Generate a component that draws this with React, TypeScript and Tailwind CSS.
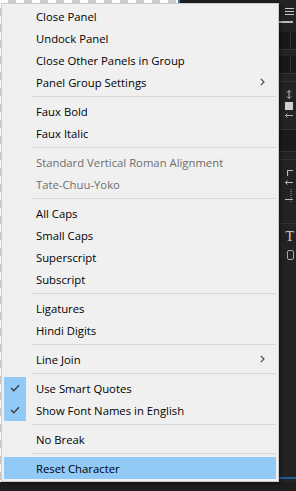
import React from "react";

type Item =
  | { type: "sep" }
  | { type: "item"; label: string; disabled?: boolean; checked?: boolean; sub?: boolean; active?: boolean };

const items: Item[] = [
  { type: "item", label: "Close Panel" },
  { type: "item", label: "Undock Panel" },
  { type: "item", label: "Close Other Panels in Group" },
  { type: "item", label: "Panel Group Settings", sub: true },
  { type: "sep" },
  { type: "item", label: "Faux Bold" },
  { type: "item", label: "Faux Italic" },
  { type: "sep" },
  { type: "item", label: "Standard Vertical Roman Alignment", disabled: true },
  { type: "item", label: "Tate-Chuu-Yoko", disabled: true },
  { type: "sep" },
  { type: "item", label: "All Caps" },
  { type: "item", label: "Small Caps" },
  { type: "item", label: "Superscript" },
  { type: "item", label: "Subscript" },
  { type: "sep" },
  { type: "item", label: "Ligatures" },
  { type: "item", label: "Hindi Digits" },
  { type: "sep" },
  { type: "item", label: "Line Join", sub: true },
  { type: "sep" },
  { type: "item", label: "Use Smart Quotes", checked: true },
  { type: "item", label: "Show Font Names in English", checked: true },
  { type: "sep" },
  { type: "item", label: "No Break" },
  { type: "sep" },
  { type: "item", label: "Reset Character", active: true },
];

function Check() {
  return (
    <svg width="10" height="8" viewBox="0 0 10 8" fill="none">
      <path d="M1 4 L3.8 6.8 L9 1.2" stroke="#3a3a3a" strokeWidth="1.3" />
    </svg>
  );
}

function Chevron() {
  return (
    <svg width="5" height="8" viewBox="0 0 5 8" fill="none">
      <path d="M0.8 0.8 L4 4 L0.8 7.2" stroke="#444" strokeWidth="1.1" />
    </svg>
  );
}

export default function App() {
  return (
    <div className="relative w-[296px] h-[491px] overflow-hidden bg-[#1e1e1e] font-['Open_Sans',sans-serif]">
      {/* background workspace */}
      <div className="flex h-[482px]">
        <div className="w-[178px] h-full bg-[conic-gradient(#cccccc_25%,#ffffff_0_50%,#cccccc_0_75%,#ffffff_0)] bg-[length:16px_16px]" />
        <div className="w-[2px] h-[4px] bg-[#2d7bd6]" />
        <div className="flex-1 h-full bg-[#1e1e1e]" />
        <div className="w-[17px] h-full bg-[#232323] flex flex-col">
          <div className="h-[21px] flex items-center justify-center pl-[4px] pt-[3px]">
            <svg width="9" height="8" viewBox="0 0 9 8">
              <rect x="0" y="0" width="9" height="1" fill="#c8c8c8" />
              <rect x="0" y="3" width="9" height="1" fill="#c8c8c8" />
              <rect x="0" y="6" width="9" height="1" fill="#c8c8c8" />
            </svg>
          </div>
          <div className="h-[2px] w-[14px] bg-[#b8b8b8]" />
          <div className="h-[9px]" />
          <div className="h-[18px] bg-[#181818] border-b border-[#333] flex justify-end"><div className="w-px h-full bg-[#333] mr-[5px]" /></div>
          <div className="h-[6px]" />
          <div className="h-[18px] bg-[#181818] border-b border-[#333] flex justify-end"><div className="w-px h-full bg-[#333] mr-[5px]" /></div>
          <div className="h-[8px] border-b border-[#333]" />
          <div className="h-[40px] flex flex-col items-end pr-[3px] pt-[8px] gap-[3px]">
            <svg width="8" height="9" viewBox="0 0 8 9" fill="none">
              <path d="M4 0.5 V8.5 M2 2.5 L4 0.5 L6 2.5 M2 6.5 L4 8.5 L6 6.5" stroke="#bbb" strokeWidth="1" />
            </svg>
            <div className="w-[8px] h-[8px] bg-[#d0d0d0]" />
            <svg width="8" height="5" viewBox="0 0 8 5" fill="none">
              <path d="M0.5 2.5 H8 M2.5 0.5 L0.5 2.5 L2.5 4.5" stroke="#aaa" strokeWidth="1" />
            </svg>
          </div>
          <div className="h-[8px] border-b border-[#333]" />
          <div className="h-[22px] bg-[#1a1a1a] border-b border-[#333]" />
          <div className="h-[8px] border-b border-[#333]" />
          <div className="h-[56px] flex flex-col items-end pr-[3px] pt-[10px] gap-[4px]">
            <svg width="6" height="6" viewBox="0 0 6 6" fill="none">
              <path d="M0.5 6 V0.5 H6" stroke="#bbb" strokeWidth="1.2" />
            </svg>
            <svg width="8" height="5" viewBox="0 0 8 5" fill="none">
              <path d="M0.5 2.5 H8 M2.5 0.5 L0.5 2.5 L2.5 4.5" stroke="#bbb" strokeWidth="1" />
            </svg>
            <svg width="8" height="14" viewBox="0 0 8 14" fill="none">
              <path d="M6 0 V14" stroke="#999" strokeWidth="1" strokeDasharray="1 1" />
              <path d="M0 10.5 H8" stroke="#bbb" strokeWidth="1" />
            </svg>
          </div>
          <div className="h-[8px] border-b border-[#333]" />
          <div className="h-[40px] flex flex-col items-end pr-[2px] pt-[6px] gap-[6px]">
            <span className="text-[#ccc] font-['Liberation_Serif',serif] text-[14px] leading-none">T</span>
            <div className="w-[7px] h-[10px] border border-[#aaa] rounded-[2px]" />
          </div>
          <div className="flex-1" />
        </div>
      </div>
      <div className="absolute right-0 top-[477px] w-[19px] h-[2px] bg-[#1f5f9e]" />

      {/* context menu */}
      <div className="absolute left-[1px] top-[3px] w-[278px] bg-[#f0f0f0] border border-[#cccccc] pt-[1px] pb-[2px] px-[2px] shadow-[2px_2px_3px_rgba(0,0,0,0.35)]">
        {items.map((it, i) =>
          it.type === "sep" ? (
            <div key={i} className="h-[7px] flex items-center pl-[28px]">
              <div className="h-px w-full bg-[#d7d7d7]" />
            </div>
          ) : (
            <div
              key={i}
              className={
                "h-[22px] flex items-center text-[11.3px] " +
                (it.active ? "bg-[#91c9f7] " : "") +
                (it.disabled ? "text-[#6d6d6d]" : "text-[#000000]")
              }
            >
              <div
                className={
                  "w-[22px] h-full flex items-center justify-center " +
                  (it.checked ? "bg-[#91c9f7]" : "")
                }
              >
                {it.checked ? <Check /> : null}
              </div>
              <span className="pl-[10px] pt-[2px] flex-1 whitespace-nowrap">{it.label}</span>
              {it.sub ? (
                <div className="w-[16px] flex items-center justify-start pr-[4px]">
                  <Chevron />
                </div>
              ) : null}
            </div>
          )
        )}
      </div>
    </div>
  );
}
